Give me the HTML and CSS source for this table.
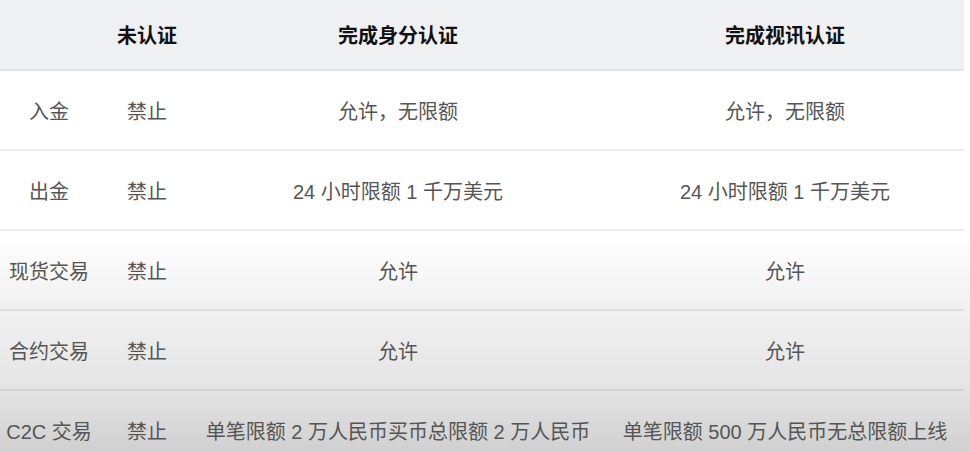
FILE: index.html
```html
<!DOCTYPE html>
<html lang="zh-CN">
<head>
<meta charset="utf-8">
<link rel="stylesheet" href="styles.css">
</head>
<body>
<div class="page">
  <table class="kyc">
    <colgroup>
      <col class="c1"><col class="c2"><col class="c3"><col class="c4">
    </colgroup>
    <thead>
      <tr>
        <th></th>
        <th>未认证</th>
        <th>完成身分认证</th>
        <th class="last">完成视讯认证</th>
      </tr>
    </thead>
    <tbody>
      <tr>
        <td>入金</td>
        <td>禁止</td>
        <td>允许，无限额</td>
        <td class="last">允许，无限额</td>
      </tr>
      <tr>
        <td>出金</td>
        <td>禁止</td>
        <td>24 小时限额 1 千万美元</td>
        <td class="last">24 小时限额 1 千万美元</td>
      </tr>
      <tr>
        <td>现货交易</td>
        <td>禁止</td>
        <td>允许</td>
        <td class="last">允许</td>
      </tr>
      <tr>
        <td>合约交易</td>
        <td>禁止</td>
        <td>允许</td>
        <td class="last">允许</td>
      </tr>
      <tr>
        <td>C2C 交易</td>
        <td>禁止</td>
        <td>单笔限额 2 万人民币买币总限额 2 万人民币</td>
        <td class="last">单笔限额 500 万人民币无总限额上线</td>
      </tr>
    </tbody>
  </table>
</div>
</body>
</html>
```

FILE: styles.css
```css
html, body {
  margin: 0;
  padding: 0;
}
body {
  width: 970px;
  height: 452px;
  overflow: hidden;
  font-family: "Liberation Sans", "Noto Sans CJK SC", sans-serif;
  background: linear-gradient(to bottom, #ffffff 0px, #ffffff 235px, #f1f1f1 305px, #e5e5e5 385px, #d0d0d0 452px);
}
.page {
  width: 964px;
}
.kyc {
  width: 964px;
  border-collapse: collapse;
  table-layout: fixed;
  font-size: 20px;
}
.c1 { width: 98px; }
.c2 { width: 98px; }
.c3 { width: 404px; }
.c4 { width: 364px; }
.kyc th {
  height: 69px;
  padding: 0;
  background: #eff0f2;
  color: #111113;
  font-weight: 700;
  text-align: center;
  border-bottom: 2px solid #e2e3e5;
}
.kyc td {
  height: 78px;
  padding: 0;
  color: #555555;
  text-align: center;
  white-space: nowrap;
  border-bottom: 2px solid rgba(0, 0, 0, 0.07);
}
.kyc .last {
  padding-left: 6px;
}
```
